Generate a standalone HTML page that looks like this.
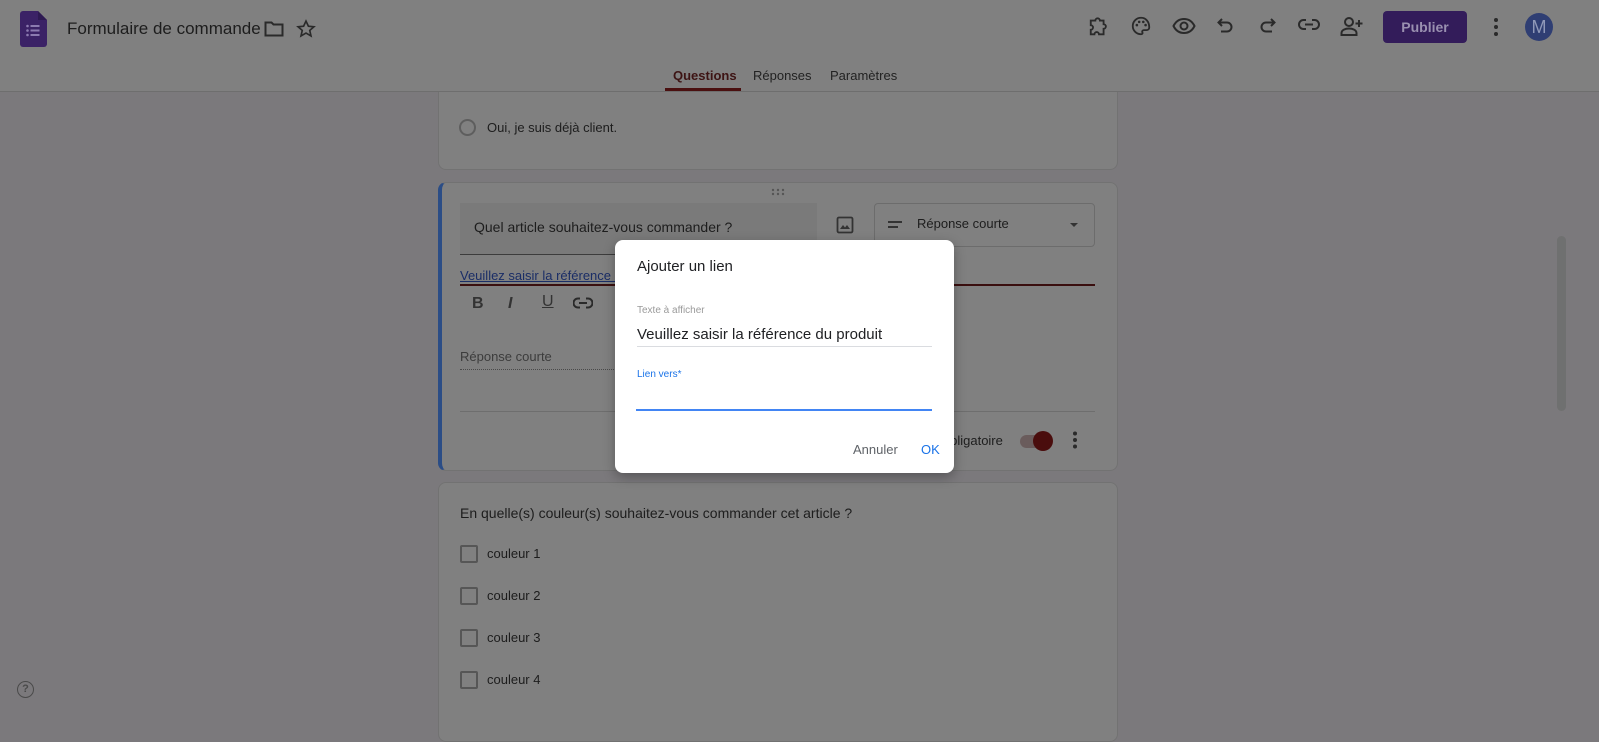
<!DOCTYPE html>
<html><head><meta charset="utf-8"><style>
*{box-sizing:border-box;margin:0;padding:0}
body{width:1599px;height:714px;overflow:hidden;background:#7b797c;font-family:"Liberation Sans",Arial,sans-serif;color:#1f1f1f;position:relative}
.a{position:absolute}
.hdr{left:0;top:0;width:1599px;height:92px;background:#808080;border-bottom:1px solid #6e6e6e}
.card{background:#808080;border:1px solid #727272;border-radius:8px}
.t{font-size:14px;color:#1d1d1d;white-space:nowrap}
svg{position:absolute}
.ic{fill:none;stroke:#2a2a2a;stroke-width:2}
.cb{width:18px;height:18px;border:2px solid #565656;border-radius:2px}
</style></head><body>
<!-- card 1 -->
<div class="a card" style="left:438px;top:92px;width:680px;height:78px;border-top:none;border-radius:0 0 8px 8px"></div>
<div class="a hdr"></div>
<!-- forms logo -->
<svg style="left:20px;top:11px" width="27" height="36" viewBox="0 0 27 36"><path d="M3 0h15l9 9v24a3 3 0 0 1-3 3H3a3 3 0 0 1-3-3V3a3 3 0 0 1 3-3z" fill="#3b2266"/><path d="M18 0v9h9z" fill="#2e1a52"/><g fill="#8c7bb0"><circle cx="7.5" cy="15" r="1.3"/><circle cx="7.5" cy="19.5" r="1.3"/><circle cx="7.5" cy="24" r="1.3"/><rect x="10.5" y="14" width="9" height="2"/><rect x="10.5" y="18.5" width="9" height="2"/><rect x="10.5" y="23" width="9" height="2"/></g></svg>
<div class="a t" style="left:67px;top:19px;font-size:17px;color:#1d1d1d">Formulaire de commande</div>
<svg style="left:264px;top:20px" width="20" height="18" viewBox="0 0 20 18"><path class="ic" d="M1.5 2.5h6l2 2h9v11h-17z"/></svg>
<svg style="left:296px;top:19px" width="20" height="20" viewBox="0 0 24 24"><path class="ic" stroke-width="1.8" d="M12 2.5l2.9 6.2 6.6.6-5 4.4 1.5 6.6L12 16.9l-6 3.4 1.5-6.6-5-4.4 6.6-.6z"/></svg>
<!-- right icons -->
<svg style="left:1088px;top:16px" width="22" height="22" viewBox="0 0 24 24"><path class="ic" d="M3 5h5a2.5 2.5 0 0 1 5 0h4v4a2.5 2.5 0 0 1 0 5v6h-5a2.5 2.5 0 0 0-5 0H3v-5a2.5 2.5 0 0 0 0-5z"/></svg>
<svg style="left:1130px;top:15px" width="22" height="22" viewBox="0 0 24 24"><path class="ic" d="M12 3a9 9 0 0 0 0 18c1.5 0 2-1 1.5-2s0-2.5 1.5-2.5H18a3 3 0 0 0 3-3C21 7 17 3 12 3z"/><g fill="#2a2a2a"><circle cx="7.5" cy="11" r="1.4"/><circle cx="10" cy="7.5" r="1.4"/><circle cx="14.5" cy="7.5" r="1.4"/><circle cx="17" cy="11" r="1.4"/></g></svg>
<svg style="left:1172px;top:16px" width="24" height="20" viewBox="0 0 24 20"><path class="ic" d="M1.5 10C4 5 8 3 12 3s8 2 10.5 7c-2.5 5-6.5 7-10.5 7S4 15 1.5 10z"/><circle class="ic" cx="12" cy="10" r="3.5"/></svg>
<svg style="left:1216px;top:16px" width="20" height="20" viewBox="0 0 20 20"><path class="ic" d="M6 3L2.5 6.5 6 10M3 6.5h8a4.5 4.5 0 0 1 0 9H5"/></svg>
<svg style="left:1257px;top:16px" width="20" height="20" viewBox="0 0 20 20"><path class="ic" d="M14 3l3.5 3.5L14 10M17 6.5H9a4.5 4.5 0 0 0 0 9h6"/></svg>
<svg style="left:1298px;top:17px" width="22" height="16" viewBox="0 0 22 16"><path class="ic" d="M8 3H5.5a4.5 4.5 0 0 0 0 9H8M14 3h2.5a4.5 4.5 0 0 1 0 9H14M7 7.5h8"/></svg>
<svg style="left:1340px;top:15px" width="24" height="22" viewBox="0 0 24 22"><circle class="ic" cx="9" cy="7" r="4"/><path class="ic" d="M1.5 20v-2c0-3 4-4.5 7.5-4.5s7.5 1.5 7.5 4.5v2zM19 5v7M15.5 8.5h7"/></svg>
<div class="a" style="left:1383px;top:11px;width:84px;height:32px;background:#331c5a;border-radius:4px;color:#9a90b0;font-size:14px;font-weight:bold;text-align:center;line-height:32px">Publier</div>
<svg style="left:1492px;top:17px" width="8" height="20" viewBox="0 0 8 20"><g fill="#2a2a2a"><circle cx="4" cy="3" r="2"/><circle cx="4" cy="10" r="2"/><circle cx="4" cy="17" r="2"/></g></svg>
<div class="a" style="left:1525px;top:13px;width:28px;height:28px;border-radius:50%;background:#2f3e73;color:#8f98b8;font-size:18px;text-align:center;line-height:28px">M</div>
<!-- tabs -->
<div class="a t" style="left:673px;top:68px;font-weight:bold;font-size:13px;color:#3d1414">Questions</div>
<div class="a" style="left:665px;top:88px;width:76px;height:3px;background:#4a1010"></div>
<div class="a t" style="left:753px;top:68px;font-size:13px;color:#222">Réponses</div>
<div class="a t" style="left:830px;top:68px;font-size:13px;color:#222">Paramètres</div>

<div class="a" style="left:459px;top:119px;width:17px;height:17px;border:2px solid #5e5e5e;border-radius:50%"></div>
<div class="a t" style="left:487px;top:120px;font-size:13px">Oui, je suis déjà client.</div>

<!-- card 2 -->
<div class="a card" style="left:438px;top:182px;width:680px;height:289px;border-left:4px solid #2b4d86"></div>
<svg style="left:771px;top:188px" width="14" height="8"><g fill="#555"><circle cx="2" cy="2" r="1.2"/><circle cx="7" cy="2" r="1.2"/><circle cx="12" cy="2" r="1.2"/><circle cx="2" cy="6" r="1.2"/><circle cx="7" cy="6" r="1.2"/><circle cx="12" cy="6" r="1.2"/></g></svg>
<div class="a" style="left:460px;top:203px;width:357px;height:52px;background:#7a7a7a;border-bottom:1px solid #3c3c3c"></div>
<div class="a t" style="left:474px;top:219px;font-size:14px">Quel article souhaitez-vous commander ?</div>
<svg style="left:836px;top:216px" width="18" height="18" viewBox="0 0 18 18"><rect x="1.5" y="1.5" width="15" height="15" rx="1.5" fill="none" stroke="#333" stroke-width="1.8"/><path d="M4 13l3-4 2 2.5 2-2.5 3 4z" fill="#333"/></svg>
<div class="a" style="left:874px;top:203px;width:221px;height:44px;border:1px solid #6c6c6c;border-radius:4px"></div>
<div class="a" style="left:888px;top:221px;width:14px;height:2px;background:#333"></div>
<div class="a" style="left:888px;top:226px;width:10px;height:2px;background:#333"></div>
<div class="a t" style="left:917px;top:216px;font-size:13px">Réponse courte</div>
<div class="a" style="left:1070px;top:223px;width:0;height:0;border-left:4px solid transparent;border-right:4px solid transparent;border-top:4px solid #333"></div>
<div class="a t" style="left:460px;top:268px;font-size:13px;color:#1a2d66;text-decoration:underline">Veuillez saisir la référence du produit</div>
<div class="a" style="left:460px;top:284px;width:635px;height:2px;background:#3a0f0f"></div>
<div class="a t" style="left:472px;top:295px;font-size:16px;font-weight:bold;color:#333">B</div>
<div class="a t" style="left:508px;top:295px;font-size:16px;font-weight:bold;font-style:italic;color:#333">I</div>
<div class="a t" style="left:542px;top:293px;font-size:16px;text-decoration:underline;color:#333">U</div>
<svg style="left:573px;top:296px" width="20" height="14" viewBox="0 0 20 14"><path class="ic" stroke="#333" d="M7 2.5H5a4.5 4.5 0 0 0 0 9h2M13 2.5h2a4.5 4.5 0 0 1 0 9h-2M6 7h8"/></svg>
<div class="a t" style="left:460px;top:349px;font-size:13px;color:#3c3c3c">Réponse courte</div>
<div class="a" style="left:460px;top:369px;width:300px;border-top:1px dotted #4a4a4a"></div>
<div class="a" style="left:460px;top:411px;width:635px;height:1px;background:#6e6e6e"></div>
<div class="a t" style="left:940px;top:433px;font-size:13px">Obligatoire</div>
<div class="a" style="left:1020px;top:435px;width:30px;height:13px;border-radius:7px;background:#6a5c5c"></div>
<div class="a" style="left:1033px;top:431px;width:20px;height:20px;border-radius:50%;background:#4a0d0d"></div>
<svg style="left:1071px;top:431px" width="8" height="18"><g fill="#2a2a2a"><circle cx="4" cy="2.5" r="2"/><circle cx="4" cy="9" r="2"/><circle cx="4" cy="15.5" r="2"/></g></svg>

<!-- card 3 -->
<div class="a card" style="left:438px;top:482px;width:680px;height:260px"></div>
<div class="a t" style="left:460px;top:505px;font-size:14px">En quelle(s) couleur(s) souhaitez-vous commander cet article ?</div>
<div class="a cb" style="left:460px;top:545px"></div><div class="a t" style="left:487px;top:546px;font-size:13px">couleur 1</div>
<div class="a cb" style="left:460px;top:587px"></div><div class="a t" style="left:487px;top:588px;font-size:13px">couleur 2</div>
<div class="a cb" style="left:460px;top:629px"></div><div class="a t" style="left:487px;top:630px;font-size:13px">couleur 3</div>
<div class="a cb" style="left:460px;top:671px"></div><div class="a t" style="left:487px;top:672px;font-size:13px">couleur 4</div>

<!-- help & scrollbar -->
<div class="a" style="left:17px;top:681px;width:17px;height:17px;border:1.5px solid #4a4a4a;border-radius:50%;font-size:11px;text-align:center;line-height:14px;color:#4a4a4a;font-weight:bold">?</div>
<div class="a" style="left:1557px;top:236px;width:9px;height:175px;border-radius:5px;background:#6f7070"></div>

<!-- dialog -->
<div class="a" style="left:615px;top:240px;width:339px;height:233px;background:#fff;border-radius:8px;box-shadow:0 4px 12px rgba(0,0,0,.3)"></div>
<div class="a t" style="left:637px;top:258px;font-size:15px;color:#202124">Ajouter un lien</div>
<div class="a t" style="left:637px;top:305px;font-size:10px;color:#9a9a9a">Texte à afficher</div>
<div class="a t" style="left:637px;top:326px;font-size:15px;color:#202124">Veuillez saisir la référence du produit</div>
<div class="a" style="left:637px;top:346px;width:295px;height:1px;background:#dadce0"></div>
<div class="a t" style="left:637px;top:369px;font-size:10px;color:#1a73e8">Lien vers*</div>
<div class="a" style="left:636px;top:409px;width:296px;height:2px;background:#4285f4"></div>
<div class="a t" style="left:853px;top:442px;font-size:13px;color:#5f6368">Annuler</div>
<div class="a t" style="left:921px;top:442px;font-size:13px;color:#1a73e8">OK</div>
</body></html>
